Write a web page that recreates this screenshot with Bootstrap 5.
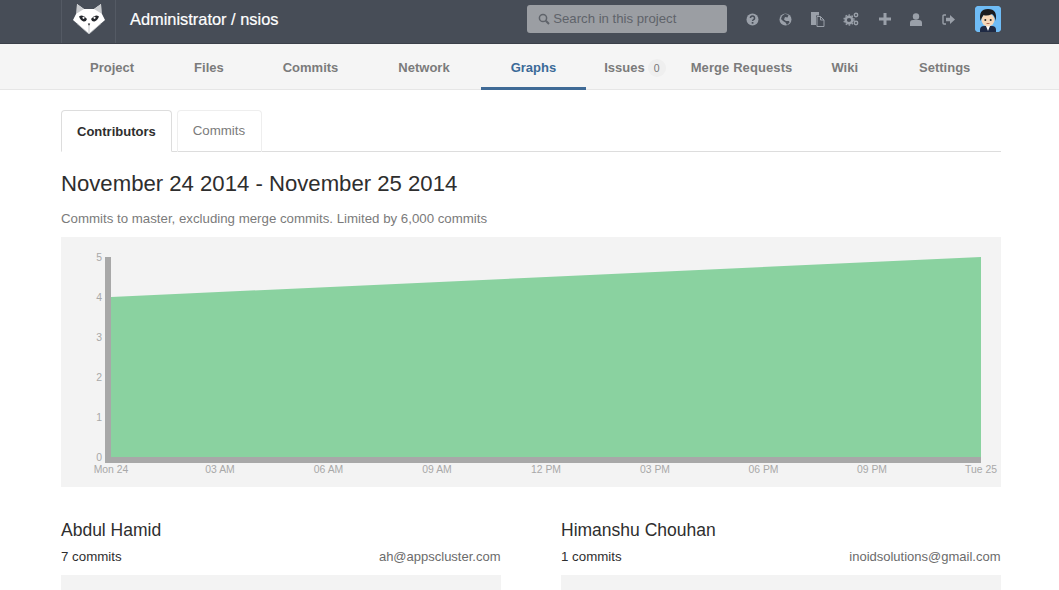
<!DOCTYPE html>
<html lang="en"><head><meta charset="utf-8"><title>Graphs</title>
<link href="https://cdn.jsdelivr.net/npm/bootstrap@5.3.0/dist/css/bootstrap.min.css" rel="stylesheet">
<style>
html,body{height:590px;overflow:hidden}
body{font-family:"Liberation Sans",Arial,sans-serif;font-size:13.3px;color:#2e2e2e;background:#fff}
.top{height:44px;background:#474d57;border-bottom:1px solid #3b4049;padding:0 58px 0 61px}
.logo{width:55px;height:43px;border-left:1px solid #545a64;border-right:1px solid #545a64;margin-right:14px;padding-bottom:5px}
.title{font-size:16.4px;color:#fff;line-height:38px;margin-bottom:5px;-webkit-text-stroke:.2px #fff}
.search{width:200px;height:28px;background:#9b9ea3;border-radius:3px;color:#5f636a;font-size:13.2px;margin-right:9px;margin-bottom:5px;padding-left:11px;gap:3px}
.tools{margin-bottom:5px}
.tic{width:32.7px;justify-content:center;display:flex}
.tic.plus{padding-left:3px}
.avatar{width:26px;height:26px;border-radius:4px;margin-left:10px;background:#6fbcf6;overflow:hidden;display:block}
.snav{height:46px;background:#f5f5f5;border-bottom:1px solid #e6e6e6;padding-left:60px}
.snav a{font-size:13px;font-weight:700;color:#7b7b7b;text-decoration:none;padding:2px 30px 0;height:45px;display:flex;align-items:center}
.snav a.fl{padding-right:29px}
.snav a.nw{padding-right:31px}
.snav a.active{color:#3b6a98;border-bottom:3px solid #3f6a96;height:46px;padding-top:5px}
.snav a.iss{padding:2px 25px 0 18px}
.snav a.mr{padding:2px 39px 0 0;letter-spacing:.1px}
.snav a.wk{padding:2px 61px 0 0}
.snav a.st{padding:2px 0 0}
.cnt{display:inline-block;width:18px;height:18px;border-radius:9px;background:#efefef;font-size:10.5px;font-weight:400;text-align:center;line-height:18px;color:#777;margin-left:3px}
.page{padding:20px 58px 0 61px}
.nav-tabs{border-bottom:1px solid #ddd;height:42px;gap:5px}
.nav-tabs .nav-link{font-size:13.3px;padding:0 16px 0 15px;height:42px;line-height:40px;margin:0;border:1px solid #eee;border-bottom:0;border-radius:4px 4px 0 0;color:#7b7b7b}
.nav-tabs .nav-link.active{font-size:13px;font-weight:700;color:#2e2e2e;padding:0 15px;border:1px solid #ddd;border-bottom:1px solid #fff;line-height:42px;background:#fff}
h3.range{font-size:22.15px;font-weight:400;margin:20px 0 0;line-height:24px;color:#2e2e2e}
.sub{color:#7b7b7b;font-size:13.27px;line-height:18px;margin:14px 0 0}
.chart{display:block;width:940px;height:250px;background:#f3f3f3;margin-top:9px}
.chart text{font-family:"Liberation Sans",Arial,sans-serif;font-size:10.4px;fill:#a8a8a8}
.people{margin-top:33px;gap:60px}
.person{width:440px}
.person h4{font-size:17.5px;font-weight:400;margin:0;line-height:20px;color:#2e2e2e}
.meta{line-height:16px;margin-top:9px}
.mail{color:#6b6b6b;font-size:13px;margin-right:.5px}
.mini{height:40px;background:#f3f3f3;margin-top:10px}
</style></head><body>
<header class="top d-flex align-items-center">
 <div class="logo d-flex align-items-center justify-content-center flex-shrink-0">
  <svg width="32" height="30" viewBox="0 0 32 30"><path d="M4 0 11 5H21L28 0 28.500 9 32 16 16 30 0 16 3.500 9Z" fill="#fff"/><path d="M4 0 11 5 4.500 9 3.500 9ZM28 0 21 5 27.500 9 28.500 9Z" fill="#c9cbce"/><path d="M6 12.500Q10 9.500 14 15 13 18 10.500 17.500 7.500 16.500 6 12.500ZM26 12.500Q22 9.500 18 15 19 18 21.500 17.500 24.500 16.500 26 12.500Z" fill="#24272c"/><circle cx="10.500" cy="13.800" r="1.100" fill="#fff"/><circle cx="21.500" cy="13.800" r="1.100" fill="#fff"/><path d="M14.800 19.500h2.400L16 22z" fill="#24272c"/><path d="M16 22v8M4 19.500 16 30 28 19.500" fill="none" stroke="#b9bcc0" stroke-width=".8"/></svg>
 </div>
 <div class="title flex-grow-1">Administrator / nsios</div>
 <div class="search d-flex align-items-center flex-shrink-0">
  <svg width="12" height="12" viewBox="0 0 12 12"><circle cx="5" cy="5" r="3.600" fill="none" stroke="#5f636a" stroke-width="1.500"/><path d="M7.800 7.800 11 11" stroke="#5f636a" stroke-width="2"/></svg>Search in this project</div>
 <div class="tools d-flex align-items-center flex-shrink-0">
  <span class="tic"><svg width="13" height="13" viewBox="0 0 13 13"><circle cx="6.500" cy="6.500" r="6" fill="#9aa0a9"/><path d="M4.400 5a2.100 2 0 1 1 3.200 1.700c-.7.4-1 .7-1 1.400" fill="none" stroke="#474d57" stroke-width="1.500"/><rect x="5.700" y="9" width="1.700" height="1.700" fill="#474d57"/></svg></span>
  <span class="tic"><svg width="13" height="13" viewBox="0 0 13 13"><circle cx="6.500" cy="6.500" r="6" fill="#9aa0a9"/><path d="M6 .8 9.500 2 8.500 4.500 6 4 5 6.500 7 8h3l.5 1.500L8 12 6.500 9.500 4 8 2 6 3 3z" fill="#474d57"/></svg></span>
  <span class="tic"><svg width="15" height="15" viewBox="0 0 15 15"><path d="M1 0h8v3.500H6V13H1z" fill="#9aa0a9"/><path d="M7 4.500h3.500L14 8v6.500H7z" fill="#474d57" stroke="#9aa0a9"/><path d="M10.500 4.500V8H14" fill="none" stroke="#9aa0a9"/></svg></span>
  <span class="tic"><svg width="16" height="14" viewBox="0 0 16 14"><circle cx="6" cy="8" r="3.300" fill="none" stroke="#9aa0a9" stroke-width="2.400"/><circle cx="6" cy="8" r="5" fill="none" stroke="#9aa0a9" stroke-width="1.300" stroke-dasharray="1.600 1.600"/><circle cx="13" cy="3" r="1.700" fill="none" stroke="#9aa0a9" stroke-width="1.400"/><circle cx="13" cy="11" r="1.700" fill="none" stroke="#9aa0a9" stroke-width="1.400"/></svg></span>
  <span class="tic plus"><svg width="12" height="12" viewBox="0 0 12 12"><path d="M4.500 0h3v4.500H12v3H7.500V12h-3V7.500H0v-3h4.500z" fill="#9aa0a9"/></svg></span>
  <span class="tic"><svg width="12" height="13" viewBox="0 0 12 13"><circle cx="6" cy="3.500" r="3.200" fill="#9aa0a9"/><path d="M0 13V10Q0 7 3 7h6q3 0 3 3v3z" fill="#9aa0a9"/></svg></span>
  <span class="tic"><svg width="13" height="11" viewBox="0 0 13 11"><path d="M4 1H2Q1 1 1 2v7q0 1 1 1h2" fill="none" stroke="#9aa0a9" stroke-width="1.400"/><path d="M4 3.700h4V1l5 4.500L8 10V7.300H4z" fill="#9aa0a9"/></svg></span>
  <span class="avatar flex-shrink-0"><svg width="26" height="26" viewBox="0 0 26 26"><rect width="26" height="26" fill="#6fbcf6"/><path d="M5 26v-2q0-4 4-4h8q4 0 4 4v2z" fill="#1f2a44"/><path d="M11 20l2 5 2-5z" fill="#fff"/><ellipse cx="13" cy="14" rx="6.500" ry="6.500" fill="#f6d7b8"/><path d="M5.500 15Q3 3 13 3q10 0 7.500 12-.5-5-3.500-7-5 2.500-8.500 1-1.500 2-3 6z" fill="#1b1b1f"/><circle cx="10.300" cy="14" r="1" fill="#222"/><circle cx="15.700" cy="14" r="1" fill="#222"/><path d="M11.500 17.500h3" stroke="#b06a55"/></svg></span>
 </div>
</header>
<nav class="snav d-flex">
 <a href="#">Project</a><a href="#" class="fl">Files</a><a href="#">Commits</a><a href="#" class="nw">Network</a><a href="#" class="active">Graphs</a><a href="#" class="iss">Issues <span class="cnt">0</span></a><a href="#" class="mr">Merge Requests</a><a href="#" class="wk">Wiki</a><a href="#" class="st">Settings</a>
</nav>
<main class="page">
 <ul class="nav nav-tabs">
  <li class="nav-item"><a class="nav-link active" href="#">Contributors</a></li>
  <li class="nav-item"><a class="nav-link" href="#">Commits</a></li>
 </ul>
 <h3 class="range">November 24 2014 - November 25 2014</h3>
 <p class="sub">Commits to master, excluding merge commits. Limited by 6,000 commits</p>
 <svg class="chart" viewBox="0 0 940 250">
  <rect x="44" y="20" width="6" height="206" fill="#a8a8a8"/><rect x="44" y="220" width="876" height="6" fill="#a8a8a8"/>
  <path d="M50 60 920 20V220H50z" fill="#8ad2a0"/>
  <g text-anchor="end"><text x="41" y="23.500">5</text><text x="41" y="63.500">4</text><text x="41" y="103.500">3</text><text x="41" y="143.500">2</text><text x="41" y="183.500">1</text><text x="41" y="223.500">0</text></g>
  <g text-anchor="middle"><text x="50" y="236">Mon 24</text><text x="159" y="236">03 AM</text><text x="267.500" y="236">06 AM</text><text x="376" y="236">09 AM</text><text x="485" y="236">12 PM</text><text x="594" y="236">03 PM</text><text x="702.500" y="236">06 PM</text><text x="811" y="236">09 PM</text><text x="920" y="236">Tue 25</text></g>
 </svg>
 <div class="people d-flex">
  <section class="person"><h4>Abdul Hamid</h4><div class="meta d-flex justify-content-between"><span>7 commits</span><span class="mail">ah@appscluster.com</span></div><div class="mini"></div></section>
  <section class="person"><h4>Himanshu Chouhan</h4><div class="meta d-flex justify-content-between"><span>1 commits</span><span class="mail">inoidsolutions@gmail.com</span></div><div class="mini"></div></section>
 </div>
</main>
<script src="https://cdn.jsdelivr.net/npm/bootstrap@5.3.0/dist/js/bootstrap.bundle.min.js"></script>
</body></html>
